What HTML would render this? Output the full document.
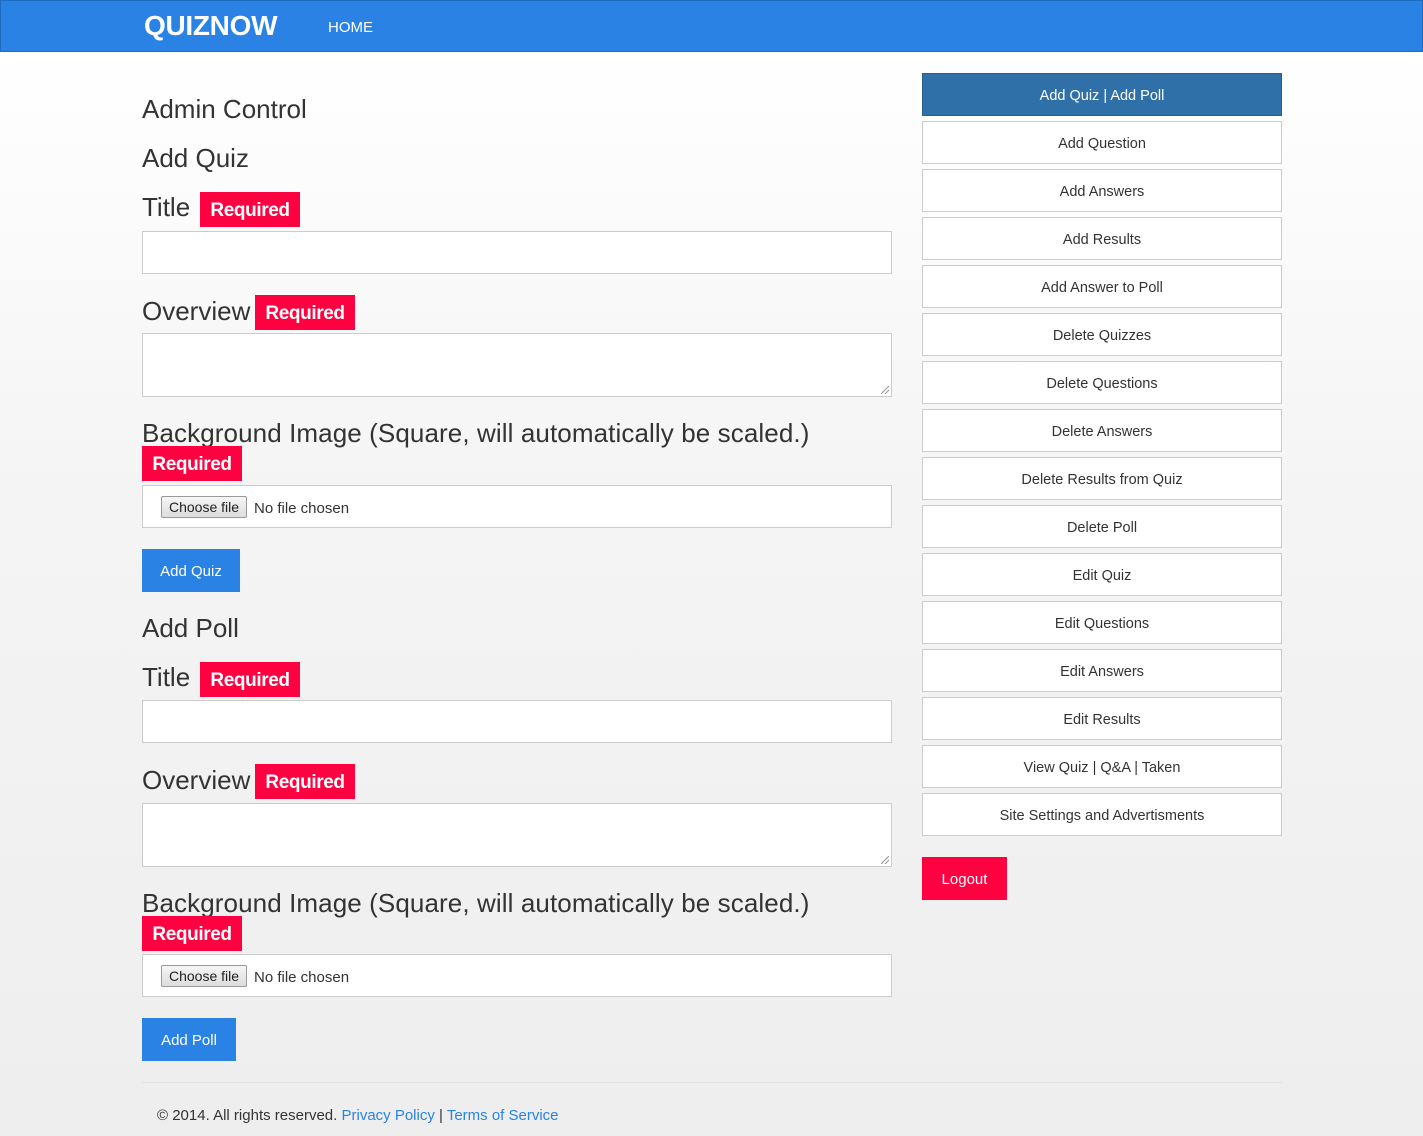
<!DOCTYPE html>
<html><head><meta charset="utf-8"><style>
*{margin:0;padding:0;box-sizing:border-box}
body{width:1423px;height:1136px;position:relative;overflow:hidden;font-family:"Liberation Sans",sans-serif;color:#333;background:linear-gradient(#fff 50px,#f4f4f4 500px,#eee 1136px)}
.a{position:absolute}
.nav{left:0;top:0;width:1423px;height:52px;background:#2a82e4;border:1px solid #1f6bc0}
.logo{left:144px;top:10px;color:#fff;font-weight:bold;font-size:28px;letter-spacing:-0.3px}
.home{left:328px;top:19px;color:#fff;font-size:15px}
.h{font-size:26px;color:#333;white-space:nowrap}
.badge{background:#ff0040;color:#fff;font-weight:bold;font-size:19px;letter-spacing:-0.4px;height:35px;line-height:37px;text-align:center}
.inp{left:142px;width:750px;background:#fff;border:1px solid #ccc}
.btn{background:#2a82e4;color:#fff;font-size:15px;text-align:center;line-height:45px;height:43px}
.fb{left:161px;border:1px solid #999;border-radius:2px;background:linear-gradient(#f6f6f6,#ddd);font-size:14px;padding:0 7px;height:22px;line-height:21px;color:#222}
.ft{font-size:15px;color:#333}
.sb{left:922px;width:360px;height:43px;line-height:44px;text-align:center;border:1px solid #ccc;background:#fff;font-size:14.5px;color:#333}
.grip{right:2px;bottom:2px;width:8px;height:8px;background:linear-gradient(135deg,transparent 45%,#999 45%,#999 55%,transparent 55%,transparent 70%,#999 70%,#999 80%,transparent 80%)}
</style></head><body>
<div class="a nav"></div>
<div class="a logo">QUIZNOW</div>
<div class="a home">HOME</div>

<div class="a h" style="left:142px;top:94px">Admin Control</div>
<div class="a h" style="left:142px;top:143px">Add Quiz</div>
<div class="a h" style="left:142px;top:192px">Title</div>
<div class="a badge" style="left:200px;top:192px;width:100px">Required</div>
<div class="a inp" style="top:231px;height:43px"></div>
<div class="a h" style="left:142px;top:296px">Overview</div>
<div class="a badge" style="left:255px;top:295px;width:100px">Required</div>
<div class="a inp" style="top:333px;height:64px"><div class="a grip"></div></div>
<div class="a h" style="left:142px;top:418px;letter-spacing:0.1px">Background Image (Square, will automatically be scaled.)</div>
<div class="a badge" style="left:142px;top:446px;width:100px">Required</div>
<div class="a inp" style="top:485px;height:43px"></div>
<div class="a fb" style="top:496px">Choose file</div>
<div class="a ft" style="left:254px;top:500px">No file chosen</div>
<div class="a btn" style="left:142px;top:549px;width:98px">Add Quiz</div>

<div class="a h" style="left:142px;top:613px">Add Poll</div>
<div class="a h" style="left:142px;top:662px">Title</div>
<div class="a badge" style="left:200px;top:662px;width:100px">Required</div>
<div class="a inp" style="top:700px;height:43px"></div>
<div class="a h" style="left:142px;top:765px">Overview</div>
<div class="a badge" style="left:255px;top:764px;width:100px">Required</div>
<div class="a inp" style="top:803px;height:64px"><div class="a grip"></div></div>
<div class="a h" style="left:142px;top:888px;letter-spacing:0.1px">Background Image (Square, will automatically be scaled.)</div>
<div class="a badge" style="left:142px;top:916px;width:100px">Required</div>
<div class="a inp" style="top:954px;height:43px"></div>
<div class="a fb" style="top:965px">Choose file</div>
<div class="a ft" style="left:254px;top:969px">No file chosen</div>
<div class="a btn" style="left:142px;top:1018px;width:94px">Add Poll</div>

<div class="a" style="left:142px;top:1082px;width:1140px;height:1px;background:#e2e2e2"></div>
<div class="a" style="left:157px;top:1107px;font-size:15px;color:#333">© 2014. All rights reserved. <span style="color:#2a82e4">Privacy Policy</span> | <span style="color:#2a82e4">Terms of Service</span></div>

<div class="a sb" style="top:73px;background:#3070a8;border-color:#285f90;color:#fff">Add Quiz | Add Poll</div>
<div class="a sb" style="top:121px">Add Question</div>
<div class="a sb" style="top:169px">Add Answers</div>
<div class="a sb" style="top:217px">Add Results</div>
<div class="a sb" style="top:265px">Add Answer to Poll</div>
<div class="a sb" style="top:313px">Delete Quizzes</div>
<div class="a sb" style="top:361px">Delete Questions</div>
<div class="a sb" style="top:409px">Delete Answers</div>
<div class="a sb" style="top:457px">Delete Results from Quiz</div>
<div class="a sb" style="top:505px">Delete Poll</div>
<div class="a sb" style="top:553px">Edit Quiz</div>
<div class="a sb" style="top:601px">Edit Questions</div>
<div class="a sb" style="top:649px">Edit Answers</div>
<div class="a sb" style="top:697px">Edit Results</div>
<div class="a sb" style="top:745px">View Quiz | Q&amp;A | Taken</div>
<div class="a sb" style="top:793px">Site Settings and Advertisments</div>
<div class="a btn" style="left:922px;top:857px;width:85px;background:#ff0040">Logout</div>
</body></html>
